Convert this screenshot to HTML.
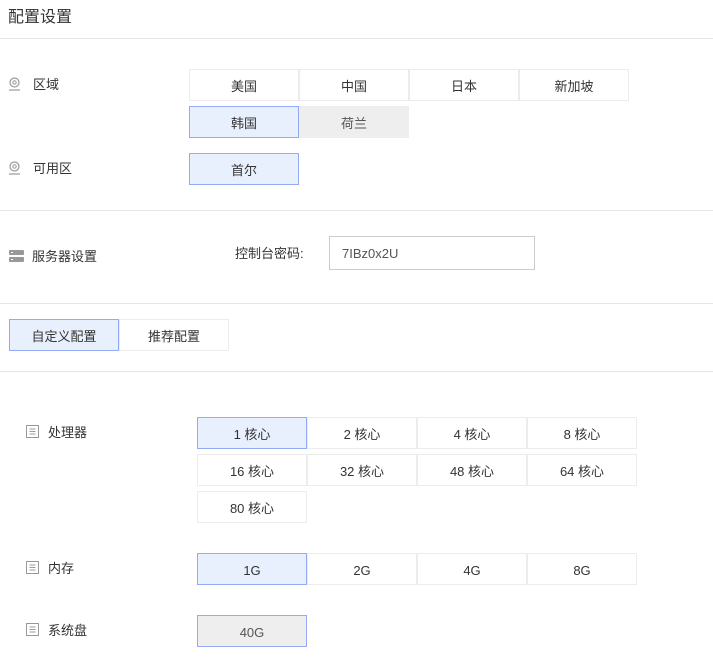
<!DOCTYPE html>
<html><head><meta charset="utf-8"><style>
*{margin:0;padding:0;box-sizing:border-box}
body{width:713px;height:657px;background:#fff;position:relative;overflow:hidden;font-family:"Liberation Sans","Noto Sans CJK SC",sans-serif;font-size:13px;color:#333}
.a{position:absolute}
.hr{position:absolute;left:0;width:713px;height:1px;background:#e6e6e6}
.b{position:absolute;width:110px;height:32px;border:1px solid #ececec;background:#fff;text-align:center;line-height:33px;font-size:13px;color:#333}
.s{background:#e8effd;border-color:#94aaf7}
.g{background:#eeeeee;border-color:#eeeeee;color:#555}
.lbl{position:absolute;font-size:13px;color:#333;line-height:16px}
</style></head><body>
<div class="a" style="left:8px;top:8px;font-size:16px;line-height:20px;color:#333">配置设置</div>
<div class="hr" style="top:38px"></div>

<svg class="a" style="left:8px;top:77px" width="13" height="14" viewBox="0 0 13 14"><circle cx="6.5" cy="5.5" r="4.5" fill="none" stroke="#999" stroke-width="1.2"/><circle cx="6.5" cy="5.5" r="1.7" fill="none" stroke="#999"/><path d="M1 13h11" stroke="#999" stroke-width="1.2"/></svg>
<div class="lbl" style="left:33px;top:77px">区域</div>
<div class="b" style="left:189px;top:69px">美国</div>
<div class="b" style="left:299px;top:69px">中国</div>
<div class="b" style="left:409px;top:69px">日本</div>
<div class="b" style="left:519px;top:69px">新加坡</div>
<div class="b s" style="left:189px;top:106px">韩国</div>
<div class="b g" style="left:299px;top:106px">荷兰</div>

<svg class="a" style="left:8px;top:161px" width="13" height="14" viewBox="0 0 13 14"><circle cx="6.5" cy="5.5" r="4.5" fill="none" stroke="#999" stroke-width="1.2"/><circle cx="6.5" cy="5.5" r="1.7" fill="none" stroke="#999"/><path d="M1 13h11" stroke="#999" stroke-width="1.2"/></svg>
<div class="lbl" style="left:33px;top:161px">可用区</div>
<div class="b s" style="left:189px;top:153px">首尔</div>

<div class="hr" style="top:210px"></div>
<svg class="a" style="left:9px;top:250px" width="15" height="13" viewBox="0 0 15 13"><rect x="0" y="0" width="15" height="5" rx="1" fill="#999"/><rect x="0" y="7" width="15" height="5" rx="1" fill="#999"/><rect x="2" y="2" width="2" height="1" fill="#fff"/><rect x="2" y="9" width="2" height="1" fill="#fff"/></svg>
<div class="lbl" style="left:32px;top:249px">服务器设置</div>
<div class="lbl" style="left:235px;top:246px">控制台密码:</div>
<div class="a" style="left:329px;top:236px;width:206px;height:34px;border:1px solid #ccc;line-height:34px;padding-left:12px;color:#555">7IBz0x2U</div>
<div class="hr" style="top:303px"></div>

<div class="b s" style="left:9px;top:319px">自定义配置</div>
<div class="b" style="left:119px;top:319px">推荐配置</div>
<div class="hr" style="top:371px"></div>

<svg class="a" style="left:26px;top:425px" width="13" height="13" viewBox="0 0 13 13"><rect x=".5" y=".5" width="12" height="12" fill="none" stroke="#999"/><path d="M3.5 4h6M3.5 6.5h6M3.5 9h6" stroke="#999"/></svg>
<div class="lbl" style="left:48px;top:425px">处理器</div>
<div class="b s" style="left:197px;top:417px">1 核心</div>
<div class="b" style="left:307px;top:417px">2 核心</div>
<div class="b" style="left:417px;top:417px">4 核心</div>
<div class="b" style="left:527px;top:417px">8 核心</div>
<div class="b" style="left:197px;top:454px">16 核心</div>
<div class="b" style="left:307px;top:454px">32 核心</div>
<div class="b" style="left:417px;top:454px">48 核心</div>
<div class="b" style="left:527px;top:454px">64 核心</div>
<div class="b" style="left:197px;top:491px">80 核心</div>

<svg class="a" style="left:26px;top:561px" width="13" height="13" viewBox="0 0 13 13"><rect x=".5" y=".5" width="12" height="12" fill="none" stroke="#999"/><path d="M3.5 4h6M3.5 6.5h6M3.5 9h6" stroke="#999"/></svg>
<div class="lbl" style="left:48px;top:561px">内存</div>
<div class="b s" style="left:197px;top:553px">1G</div>
<div class="b" style="left:307px;top:553px">2G</div>
<div class="b" style="left:417px;top:553px">4G</div>
<div class="b" style="left:527px;top:553px">8G</div>

<svg class="a" style="left:26px;top:623px" width="13" height="13" viewBox="0 0 13 13"><rect x=".5" y=".5" width="12" height="12" fill="none" stroke="#999"/><path d="M3.5 4h6M3.5 6.5h6M3.5 9h6" stroke="#999"/></svg>
<div class="lbl" style="left:48px;top:623px">系统盘</div>
<div class="b" style="left:197px;top:615px;background:#eee;border-color:#94aaf7;color:#555">40G</div>
</body></html>
